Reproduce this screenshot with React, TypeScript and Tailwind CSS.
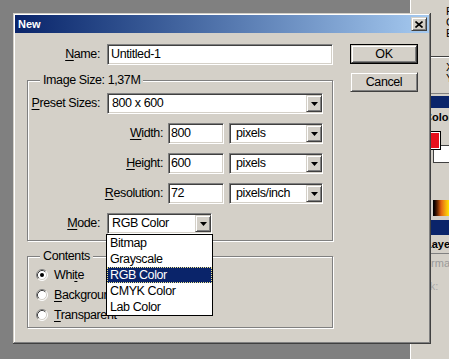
import { ReactNode } from 'react';

const sunken =
  'border border-t-[#808080] border-l-[#808080] border-b-white border-r-white shadow-[inset_1px_1px_0_#404040,inset_-1px_-1px_0_#d4d0c8]';
const raised =
  'border border-t-[#d4d0c8] border-l-[#d4d0c8] border-b-[#404040] border-r-[#404040] shadow-[inset_1px_1px_0_#fff,inset_-1px_-1px_0_#808080]';

const Key = ({ children }: { children: ReactNode }) => (
  <span className="underline underline-offset-[2px]">{children}</span>
);

const ArrowButton = () => (
  <div className={`${raised} bg-[#d4d0c8] w-[16px] h-[17px] flex items-center justify-center shrink-0`}>
    <svg width="7" height="4" viewBox="0 0 7 4">
      <path d="M0 0h7L3.5 4z" fill="#000" />
    </svg>
  </div>
);

const Field = ({ value, width }: { value: string; width: string }) => (
  <div className={`${sunken} bg-white h-[21px] flex items-center pl-[2px] ${width}`}>{value}</div>
);

const Combo = ({ value, width, children }: { value: string; width: string; children?: ReactNode }) => (
  <div className={`${sunken} relative bg-white h-[21px] flex items-center ${width}`}>
    <span className="flex-1 pl-[4px]">{value}</span>
    <ArrowButton />
    {children}
  </div>
);

const Radio = ({ checked }: { checked?: boolean }) => (
  <svg width="12" height="12" viewBox="0 0 12 12" className="shrink-0">
    <circle cx="6" cy="6" r="5" fill="#fff" />
    <path d="M2.11 9.89A5.5 5.5 0 0 1 9.89 2.11" stroke="#808080" fill="none" />
    <path d="M9.89 2.11A5.5 5.5 0 0 1 2.11 9.89" stroke="#fff" fill="none" />
    <path d="M2.82 9.18A4.5 4.5 0 0 1 9.18 2.82" stroke="#404040" fill="none" />
    <path d="M9.18 2.82A4.5 4.5 0 0 1 2.82 9.18" stroke="#d4d0c8" fill="none" />
    {checked && <circle cx="6" cy="6" r="2" fill="#000" />}
  </svg>
);

const modes = ['Bitmap', 'Grayscale', 'RGB Color', 'CMYK Color', 'Lab Color'];

const Palettes = () => (
  <div className="absolute left-[410px] top-0 w-[39px] h-[359px] bg-[#d4d0c8] border-l border-white flex flex-col text-[11px] leading-[11px] tracking-normal text-black overflow-hidden whitespace-nowrap">
    <div className="h-[56px] pl-[35px] pt-[6px] flex flex-col">
      <span>File</span>
      <span>Cmyk</span>
      <span>Edit</span>
    </div>
    <div className="h-px bg-[#404040]" />
    <div className="h-[36px] pl-[35px] pt-[4px] flex flex-col border-t border-white">
      <span>X:</span>
      <span>Y:</span>
    </div>
    <div className="h-[3px] border-t border-[#808080]" />
    <div className="h-[12px] bg-[#0a246a]" />
    <div className="h-[16px] pl-[13px] pt-[4px] font-bold">Color</div>
    <div className="h-[76px] relative">
      <div className="absolute left-[22px] top-[21px] w-[20px] h-[18px] bg-white border border-[#404040]" />
      <div className="absolute left-[16px] top-[7px] w-[14px] h-[19px] bg-[#e8101c] border border-black shadow-[inset_0_0_0_1px_#fff]" />
    </div>
    <div className="h-[16px] ml-[22px] bg-linear-to-r from-black via-[#e06010] to-[#ffe400]" />
    <div className="h-[4px]" />
    <div className="h-[15px] bg-[#0a246a]" />
    <div className="h-[18px] pl-[14px] pt-[4px] font-bold">Layers</div>
    <div className="h-[18px] pl-[6px] pt-[4px] text-[#9a9a9a] border-t border-[#808080]">Normal</div>
    <div className="h-[20px] pl-[1px] pt-[10px] text-[#a8a8a8]">Lock:</div>
  </div>
);

export default function App() {
  return (
    <div className="relative w-[449px] h-[359px] overflow-hidden bg-[#808080] font-['Liberation_Sans',Arial,sans-serif] text-[12.5px] leading-[15px] tracking-[-0.4px] text-black">
      <Palettes />

      <div className="absolute left-[13px] top-[13px] w-[418px] h-[331px] bg-[#d4d0c8] p-[2px] shadow-[inset_-1px_-1px_0_#404040,inset_1px_1px_0_#d4d0c8,inset_-2px_-2px_0_#808080,inset_2px_2px_0_#fff]">
        <div className="h-[18px] bg-linear-to-r from-[#0a246a] to-[#a6caf0] flex items-center justify-between pl-[3px] pr-[2px]">
          <span className="text-white font-bold text-[11px] tracking-normal">New</span>
          <div className={`${raised} bg-[#d4d0c8] w-[16px] h-[14px] flex items-center justify-center`}>
            <svg width="8" height="7" viewBox="0 0 8 7">
              <path d="M0.5 0.5L7.5 6.5M7.5 0.5L0.5 6.5" stroke="#000" strokeWidth="1.6" />
            </svg>
          </div>
        </div>

        <div className="flex pl-[12px] pt-[11px]">
          <div className="w-[306px] flex flex-col">
            <div className="flex items-center h-[21px]">
              <span className="w-[73px] text-right">
                <Key>N</Key>ame:
              </span>
              <Field value="Untitled-1" width="ml-[7px] w-[226px] pl-[3px]" />
            </div>

            <fieldset className="mt-[8px] border border-[#808080] shadow-[inset_1px_1px_0_#fff,1px_1px_0_#fff] pb-[6px]">
              <legend className="ml-[12px] px-[3px] bg-[#d4d0c8]">Image Size: 1,37M</legend>
              <div className="flex flex-col gap-[9px] pt-[5px]">
                <div className="flex items-center">
                  <span className="w-[72px] text-right whitespace-nowrap">
                    <Key>P</Key>reset Sizes:
                  </span>
                  <Combo value="800 x 600" width="ml-[7px] w-[216px]" />
                </div>
                {[
                  ['W', 'idth:', '800', 'pixels'],
                  ['H', 'eight:', '600', 'pixels'],
                  ['R', 'esolution:', '72', 'pixels/inch'],
                ].map(([k, rest, val, unit]) => (
                  <div key={k} className="flex items-center">
                    <span className="w-[135px] text-right">
                      <Key>{k}</Key>
                      {rest}
                    </span>
                    <Field value={val} width="ml-[5px] w-[56px]" />
                    <Combo value={unit} width="ml-[5px] w-[94px] pl-[2px]" />
                  </div>
                ))}
                <div className="flex items-center">
                  <span className="w-[72px] text-right">
                    <Key>M</Key>ode:
                  </span>
                  <Combo value="RGB Color" width="ml-[7px] w-[105px]">
                    <div className="absolute left-[-2px] top-[20px] w-[107px] bg-white border border-black z-10">
                      {modes.map((m) => (
                        <div
                          key={m}
                          className={
                            m === 'RGB Color'
                              ? 'h-[16px] flex items-center pl-[2px] bg-[#0a246a] text-white border border-dotted border-[#f0e68c]'
                              : 'h-[16px] flex items-center pl-[3px]'
                          }
                        >
                          {m}
                        </div>
                      ))}
                    </div>
                  </Combo>
                </div>
              </div>
            </fieldset>

            <fieldset className="mt-[8px] border border-[#808080] shadow-[inset_1px_1px_0_#fff,1px_1px_0_#fff] pb-[2px]">
              <legend className="ml-[12px] px-[3px] bg-[#d4d0c8]">Contents</legend>
              <div className="flex flex-col pt-px pl-[8px]">
                <div className="h-[20px] flex items-center gap-[6px]">
                  <Radio checked />
                  <span>
                    Whi<Key>t</Key>e
                  </span>
                </div>
                <div className="h-[20px] flex items-center gap-[6px]">
                  <Radio />
                  <span className="whitespace-nowrap">
                    <Key>B</Key>ackground Color
                  </span>
                </div>
                <div className="h-[20px] flex items-center gap-[6px]">
                  <Radio />
                  <span>
                    <Key>T</Key>ransparent
                  </span>
                </div>
              </div>
            </fieldset>
          </div>

          <div className="ml-[17px] w-[68px] flex flex-col">
            <div className="h-[20px] border border-black">
              <div className={`${raised} h-full flex items-center justify-center`}>OK</div>
            </div>
            <div className={`${raised} mt-[8px] h-[20px] flex items-center justify-center`}>Cancel</div>
          </div>
        </div>
      </div>
    </div>
  );
}
